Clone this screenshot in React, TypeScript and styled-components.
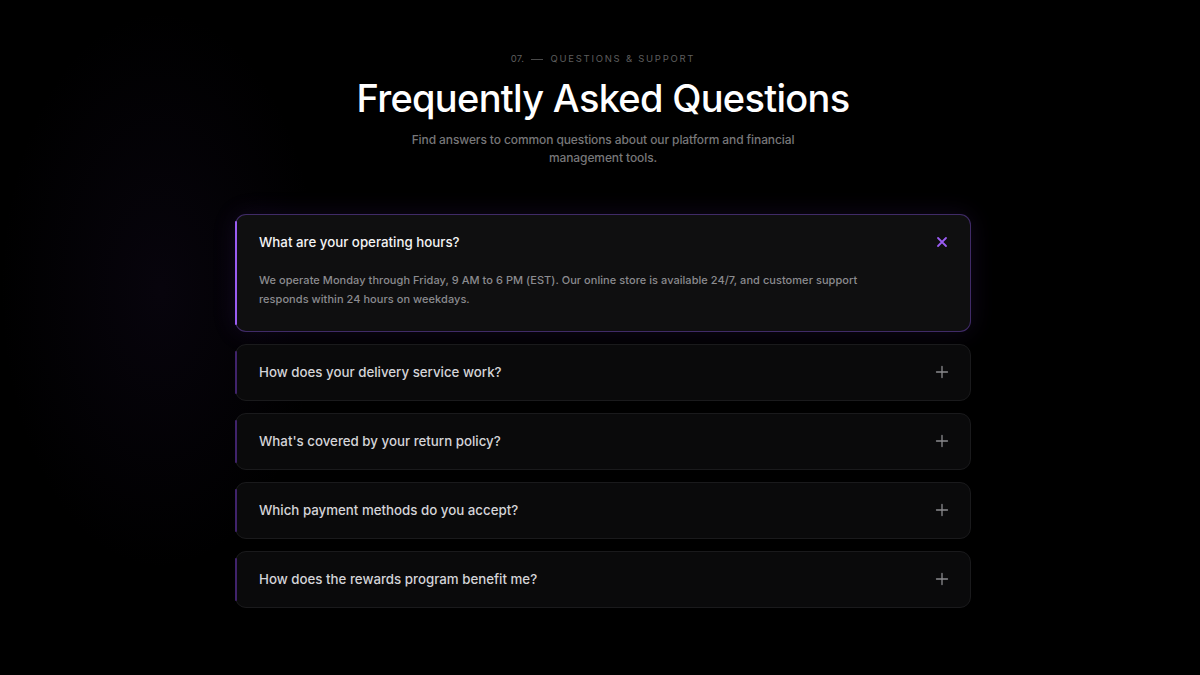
import styled, { createGlobalStyle } from "styled-components";

const Global = createGlobalStyle`
  html, body {
    margin: 0;
    padding: 0;
    background: #000;
  }
  body {
    font-family: Inter, "Noto Sans", sans-serif;
    -webkit-font-smoothing: antialiased;
  }
`;

const faqs = [
  {
    q: "What are your operating hours?",
    a: "We operate Monday through Friday, 9 AM to 6 PM (EST). Our online store is available 24/7, and customer support responds within 24 hours on weekdays.",
  },
  { q: "How does your delivery service work?", a: "" },
  { q: "What's covered by your return policy?", a: "" },
  { q: "Which payment methods do you accept?", a: "" },
  { q: "How does the rewards program benefit me?", a: "" },
];

const App = () => {
  return (
    <Page>
      <Global />
      <Section>
        <Eyebrow>
          <span>07.</span>
          <Dash />
          <span>QUESTIONS &amp; SUPPORT</span>
        </Eyebrow>
        <Title>Frequently Asked Questions</Title>
        <Subtitle>
          Find answers to common questions about our platform and financial
          management tools.
        </Subtitle>

        <List>
          {faqs.map((f, i) => (
            <Card key={f.q} $open={i === 0}>
              <Head>
                <Question $open={i === 0}>{f.q}</Question>
                {i === 0 ? (
                  <Icon viewBox="0 0 14 14" $open>
                    <path d="M3 3 L11 11 M11 3 L3 11" />
                  </Icon>
                ) : (
                  <Icon viewBox="0 0 14 14">
                    <path d="M7 1.5 V12.5 M1.5 7 H12.5" />
                  </Icon>
                )}
              </Head>
              {i === 0 && <Answer>{f.a}</Answer>}
            </Card>
          ))}
        </List>
      </Section>
    </Page>
  );
};

export default App;

const Page = styled.div`
  min-height: 675px;
  width: 100%;
  box-sizing: border-box;
  padding-left: 6px;
  background:
    radial-gradient(ellipse 160px 280px at 160px 290px, rgba(70, 40, 120, 0.1), transparent 100%),
    #000;
  display: flex;
  justify-content: center;
`;

const Section = styled.div`
  width: 736px;
  padding-top: 53px;
  display: flex;
  flex-direction: column;
  align-items: center;
`;

const Eyebrow = styled.div`
  display: flex;
  align-items: center;
  gap: 7px;
  font-size: 9.5px;
  letter-spacing: 1.75px;
  color: #5e5e5e;
  line-height: 12px;

  span:first-child {
    letter-spacing: 0.3px;
  }
`;

const Dash = styled.i`
  display: block;
  width: 12px;
  height: 1px;
  background: #4a4a4a;
`;

const Title = styled.h1`
  margin: 8px 0 0;
  font-size: 38px;
  font-weight: 500;
  letter-spacing: -0.7px;
  color: #fff;
  line-height: 50px;
`;

const Subtitle = styled.p`
  margin: 8px 0 0;
  width: 400px;
  text-align: center;
  font-size: 12px;
  font-weight: 500;
  letter-spacing: -0.1px;
  line-height: 18px;
  color: #777779;
`;

const List = styled.div`
  width: 100%;
  margin-top: 47px;
  display: flex;
  flex-direction: column;
  gap: 12px;
`;

const Card = styled.div<{ $open?: boolean }>`
  position: relative;
  box-sizing: border-box;
  border-radius: 11px;
  padding: 0 21px 0 23px;
  background: ${(p) => (p.$open ? "#0f0f10" : "#0a0a0b")};
  border: 1px solid ${(p) => (p.$open ? "rgba(124, 77, 210, 0.45)" : "#1a1a1c")};
  box-shadow: ${(p) => (p.$open ? "0 0 24px rgba(110, 60, 200, 0.14)" : "none")};
  min-height: 56.6px;
  padding-bottom: ${(p) => (p.$open ? "22px" : "0")};

  &::before {
    content: "";
    position: absolute;
    left: -1px;
    top: 6px;
    bottom: 6px;
    width: 2px;
    border-radius: 2px;
    background: ${(p) => (p.$open ? "#9a5cf2" : "#40236b")};
  }
`;

const Head = styled.div`
  height: 55px;
  display: flex;
  align-items: center;
  justify-content: space-between;
`;

const Question = styled.div<{ $open?: boolean }>`
  font-size: 13.3px;
  font-weight: 500;
  color: ${(p) => (p.$open ? "#f4f4f5" : "#d4d4d8")};
  margin-top: ${(p) => (p.$open ? "-2px" : "-1px")};
`;

const Icon = styled.svg<{ $open?: boolean }>`
  width: 14px;
  height: 14px;
  margin-top: ${(p) => (p.$open ? "-2px" : "-1px")};
  fill: none;
  stroke: ${(p) => (p.$open ? "#9a5cf2" : "#8a8a8e")};
  stroke-width: ${(p) => (p.$open ? 1.8 : 1.3)};
  stroke-linecap: round;
`;

const Answer = styled.p`
  margin: 1px 0 0;
  max-width: 610px;
  font-size: 11px;
  font-weight: 500;
  letter-spacing: 0.05px;
  line-height: 19px;
  color: #8b8b8f;
`;
